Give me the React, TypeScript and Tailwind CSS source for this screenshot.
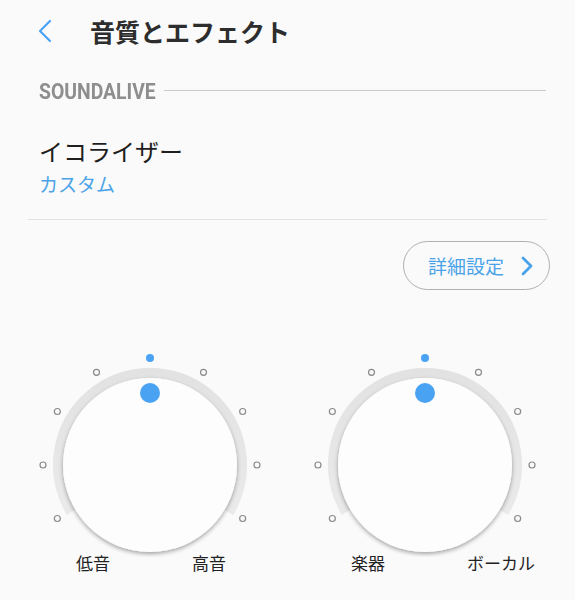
const TICKS = [-120, -90, -60, -30, 30, 60, 90, 120];

function Knob({ left, right }: { left: string; right: string }) {
  // svg center at (120, 114)
  const cx = 120;
  const cy = 114;
  const pt = (deg: number, r: number) => {
    const a = (deg * Math.PI) / 180;
    return [cx + r * Math.sin(a), cy - r * Math.cos(a)];
  };
  const [sx, sy] = pt(-121, 92);
  const [ex, ey] = pt(121, 92);
  return (
    <div className="w-[240px] flex flex-col">
      <svg width="240" height="206" viewBox="0 0 240 206">
        <defs>
          <filter id="knobShadow" x="-20%" y="-20%" width="140%" height="150%">
            <feDropShadow dx="0" dy="2" stdDeviation="2.2" floodColor="#000" floodOpacity="0.35" />
          </filter>
          <linearGradient id="ringGrad" x1="0" y1="0" x2="0" y2="1">
            <stop offset="0" stopColor="#e2e2e2" />
            <stop offset="1" stopColor="#eaeaea" />
          </linearGradient>
        </defs>
        {TICKS.map((d) => {
          const [x, y] = pt(d, 107);
          return <circle key={d} cx={x} cy={y} r="3" fill="none" stroke="#8a8a8a" strokeWidth="1.2" />;
        })}
        <circle cx={cx} cy={cy - 107} r="4" fill="#4aa3f2" />
        <path
          d={`M ${sx} ${sy} A 92 92 0 1 1 ${ex} ${ey}`}
          fill="none"
          stroke="url(#ringGrad)"
          strokeWidth="10"
        />
        <circle cx={cx} cy={cy} r="87" fill="#fdfdfd" filter="url(#knobShadow)" />
        <circle cx={cx} cy={cy - 72} r="10" fill="#4aa3f2" />
      </svg>
      <div className="flex text-[17px] leading-[24px] text-[#222] -mt-[6px]">
        <span className="ml-[46px] w-[116px]">{left}</span>
        <span>{right}</span>
      </div>
    </div>
  );
}

export default function App() {
  return (
    <div
      className="w-[575px] h-[600px] bg-[#fafafa] overflow-hidden flex flex-col"
      style={{ fontFamily: '"Noto Sans CJK JP", "Noto Sans", Roboto, sans-serif' }}
    >
      {/* header */}
      <div className="h-[62px] flex items-center pl-[35px]">
        <svg width="20" height="26" viewBox="0 0 20 26">
          <polyline points="15,3 5,13 15,23" fill="none" stroke="#4aa3f2" strokeWidth="2.2" strokeLinecap="round" strokeLinejoin="round" />
        </svg>
        <h1 className="ml-[35px] text-[25px] font-bold text-[#2d2d2d] leading-none">音質とエフェクト</h1>
      </div>

      {/* section title */}
      <div className="flex items-center pl-[39px] pr-[29px] mt-[16px] gap-[10px]">
        <span className="w-[115px] h-[24px] flex items-center pt-[3px]">
          <span
            className="text-[22px] font-bold text-[#8e8e8e] leading-none whitespace-nowrap origin-left scale-x-[0.88]"
            style={{ fontFamily: 'Roboto, "Liberation Sans", sans-serif' }}
          >
            SOUNDALIVE
          </span>
        </span>
        <div className="flex-1 h-px bg-[#c9c9c9]" />
      </div>

      {/* equalizer */}
      <div className="pl-[39px] mt-[34px] flex flex-col">
        <span className="text-[24px] leading-[30px] text-[#1e1e1e]">イコライザー</span>
        <span className="text-[19px] leading-[26px] text-[#4aa3e8] mt-[5px]">カスタム</span>
      </div>
      <div className="mx-[28px] mt-[22px] h-px bg-[#e2e2e2]" />

      {/* advanced button */}
      <div className="flex justify-end pr-[25px] mt-[21px]">
        <button className="w-[147px] h-[49px] rounded-full border-[1.5px] border-[#b0b0b0] flex items-center pl-[24px] gap-[17px] bg-transparent">
          <span className="text-[19px] text-[#4aa3e8] leading-none">詳細設定</span>
          <svg width="12" height="22" viewBox="0 0 12 22">
            <polyline points="2,3 10,11 2,19" fill="none" stroke="#4aa3e8" strokeWidth="2.8" strokeLinecap="round" strokeLinejoin="round" />
          </svg>
        </button>
      </div>

      {/* knobs */}
      <div className="flex pl-[30px] gap-[35px] mt-[61px]">
        <Knob left="低音" right="高音" />
        <Knob left="楽器" right="ボーカル" />
      </div>
    </div>
  );
}
